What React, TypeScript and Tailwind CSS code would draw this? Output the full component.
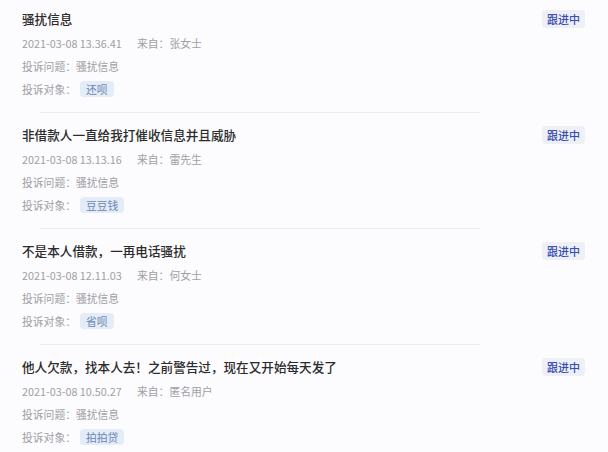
import React from 'react';

type Complaint = {
  title: string;
  time: string;
  from: string;
  issue: string;
  target: string;
};

const complaints: Complaint[] = [
  { title: '骚扰信息', time: '2021-03-08 13.36.41', from: '张女士', issue: '骚扰信息', target: '还呗' },
  { title: '非借款人一直给我打催收信息并且威胁', time: '2021-03-08 13.13.16', from: '雷先生', issue: '骚扰信息', target: '豆豆钱' },
  { title: '不是本人借款，一再电话骚扰', time: '2021-03-08 12.11.03', from: '何女士', issue: '骚扰信息', target: '省呗' },
  { title: '他人欠款，找本人去！之前警告过，现在又开始每天发了', time: '2021-03-08 10.50.27', from: '匿名用户', issue: '骚扰信息', target: '拍拍贷' },
];

const App = () => {
  return (
    <div
      className="w-[608px] h-[452px] overflow-hidden bg-[#fcfbfe] text-[#333]"
      style={{ fontFamily: '"Noto Sans CJK SC", "Noto Sans", sans-serif' }}
    >
      {complaints.map((c, i) => (
        <div key={i}>
          {i > 0 && <div className="ml-[40px] w-[440px] h-px bg-[#ececf2]" />}
          <div className={`pl-[22px] pr-[23px] pb-[11.5px] ${i === 0 ? 'pt-[9px]' : 'pt-[12px]'}`}>
            {/* 标题 + 状态 */}
            <div className="flex items-center justify-between h-[20px]">
              <div className="text-[12.6px] font-medium text-[#2b2b2b] leading-[20px]">{c.title}</div>
              <span className="h-[18px] px-[5px] flex items-center rounded-sm bg-[#eef0f7] text-[11px] font-medium text-[#3a4cae]">
                跟进中
              </span>
            </div>
            <div className="mt-[2.5px] text-[10.8px] text-[#a0a0a4]">
              <div className="flex items-center h-[23px]">
                <span className="w-[115px]">{c.time}</span>
                <span>来自：{c.from}</span>
              </div>
              <div className="flex items-center h-[23px]">投诉问题：{c.issue}</div>
              <div className="flex items-center h-[23px]">
                <span>投诉对象：</span>
                <span className="ml-[4px] h-[16px] px-[6px] flex items-center rounded-sm bg-[#e4ecf8] text-[#6a86b4]">
                  {c.target}
                </span>
              </div>
            </div>
          </div>
        </div>
      ))}
    </div>
  );
};

export default App;
